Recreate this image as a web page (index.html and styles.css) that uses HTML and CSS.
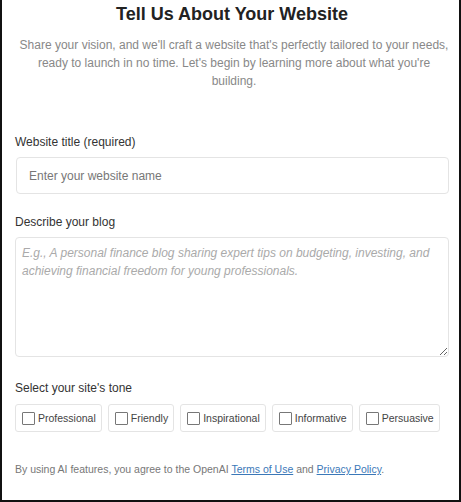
FILE: index.html
```html
<!DOCTYPE html>
<html lang="en">

<head>
    <meta charset="UTF-8">
    <meta name="viewport" content="width=device-width, initial-scale=1.0">
    <title>Tell Us About Your Website</title>
    <link rel="stylesheet" href="styles.css">
</head>

<body>
    <div class="frame">
        <h1>Tell Us About Your Website</h1>
        <p class="intro">Share your vision, and we'll craft a website that's perfectly tailored to your needs, ready to launch in no time. Let's begin by learning more about what you're building.</p>

        <form class="site-form">
            <label class="field-label" for="title">Website title (required)</label>
            <input type="text" id="title" class="text-input" placeholder="Enter your website name">

            <label class="field-label" for="blog">Describe your blog</label>
            <textarea id="blog" class="text-area" placeholder="E.g., A personal finance blog sharing expert tips on budgeting, investing, and achieving financial freedom for young professionals."></textarea>

            <div class="field-label tone-label">Select your site's tone</div>
            <div class="tones">
                <label class="tone"><input type="checkbox">Professional</label>
                <label class="tone"><input type="checkbox">Friendly</label>
                <label class="tone"><input type="checkbox">Inspirational</label>
                <label class="tone"><input type="checkbox">Informative</label>
                <label class="tone"><input type="checkbox">Persuasive</label>
            </div>
        </form>

        <p class="legal">By using AI features, you agree to the OpenAI <a href="#">Terms of Use</a> and <a href="#">Privacy Policy</a>.</p>
    </div>
</body>

</html>
```

FILE: styles.css
```css
/* General Styles */
body {
    font-family: "Liberation Sans", Arial, sans-serif;
    margin: 0;
    background: #fff;
}

.frame {
    box-sizing: border-box;
    width: 461px;
    height: 502px;
    border: 2px solid #111;
    border-top: none;
    padding: 0 10px 0 13px;
    overflow: hidden;
}

h1 {
    margin: 3px 0 0;
    font-size: 18px;
    line-height: 22px;
    text-align: center;
    color: #222;
}

.intro {
    margin: 11px -4px 0 0;
    font-size: 12px;
    line-height: 18px;
    text-align: center;
    color: #888;
}

/* Form Styles */
.site-form {
    margin-top: 44px;
}

.field-label {
    display: block;
    font-size: 12px;
    line-height: 16px;
    color: #333;
    margin-bottom: 7px;
}

.tone-label {
    margin-bottom: 8px;
}

.text-input,
.text-area {
    box-sizing: border-box;
    display: block;
    width: 100%;
    border: 1px solid #e4e4e4;
    border-radius: 4px;
    font-family: inherit;
    font-size: 12px;
    color: #333;
    margin: 0;
}

.text-input {
    height: 37px;
    padding: 0 12px;
    margin: 0 0 20px 1px;
    width: calc(100% - 1px);
}

.text-input::placeholder {
    color: #777;
}

.text-area {
    height: 120px;
    padding: 6px;
    line-height: 18px;
    resize: vertical;
    margin-bottom: 23px;
}

.text-area::placeholder {
    color: #aaa;
    font-style: italic;
}

/* Tone chips */
.tones {
    display: flex;
    gap: 6px;
}

.tone {
    display: flex;
    align-items: center;
    height: 28px;
    padding: 0 5px 0 6px;
    border: 1px solid #e4e4e4;
    border-radius: 3px;
    font-size: 10.5px;
    color: #444;
    box-sizing: border-box;
}

.tone input {
    appearance: none;
    margin: 0 3px 0 0;
    width: 13px;
    height: 13px;
    border: 1px solid #777;
    border-radius: 1px;
    background: #fff;
}

/* Footer */
.legal {
    margin: 30px 0 0;
    font-size: 10.5px;
    line-height: 14px;
    color: #777;
}

.legal a {
    color: #3b78b8;
}
```
